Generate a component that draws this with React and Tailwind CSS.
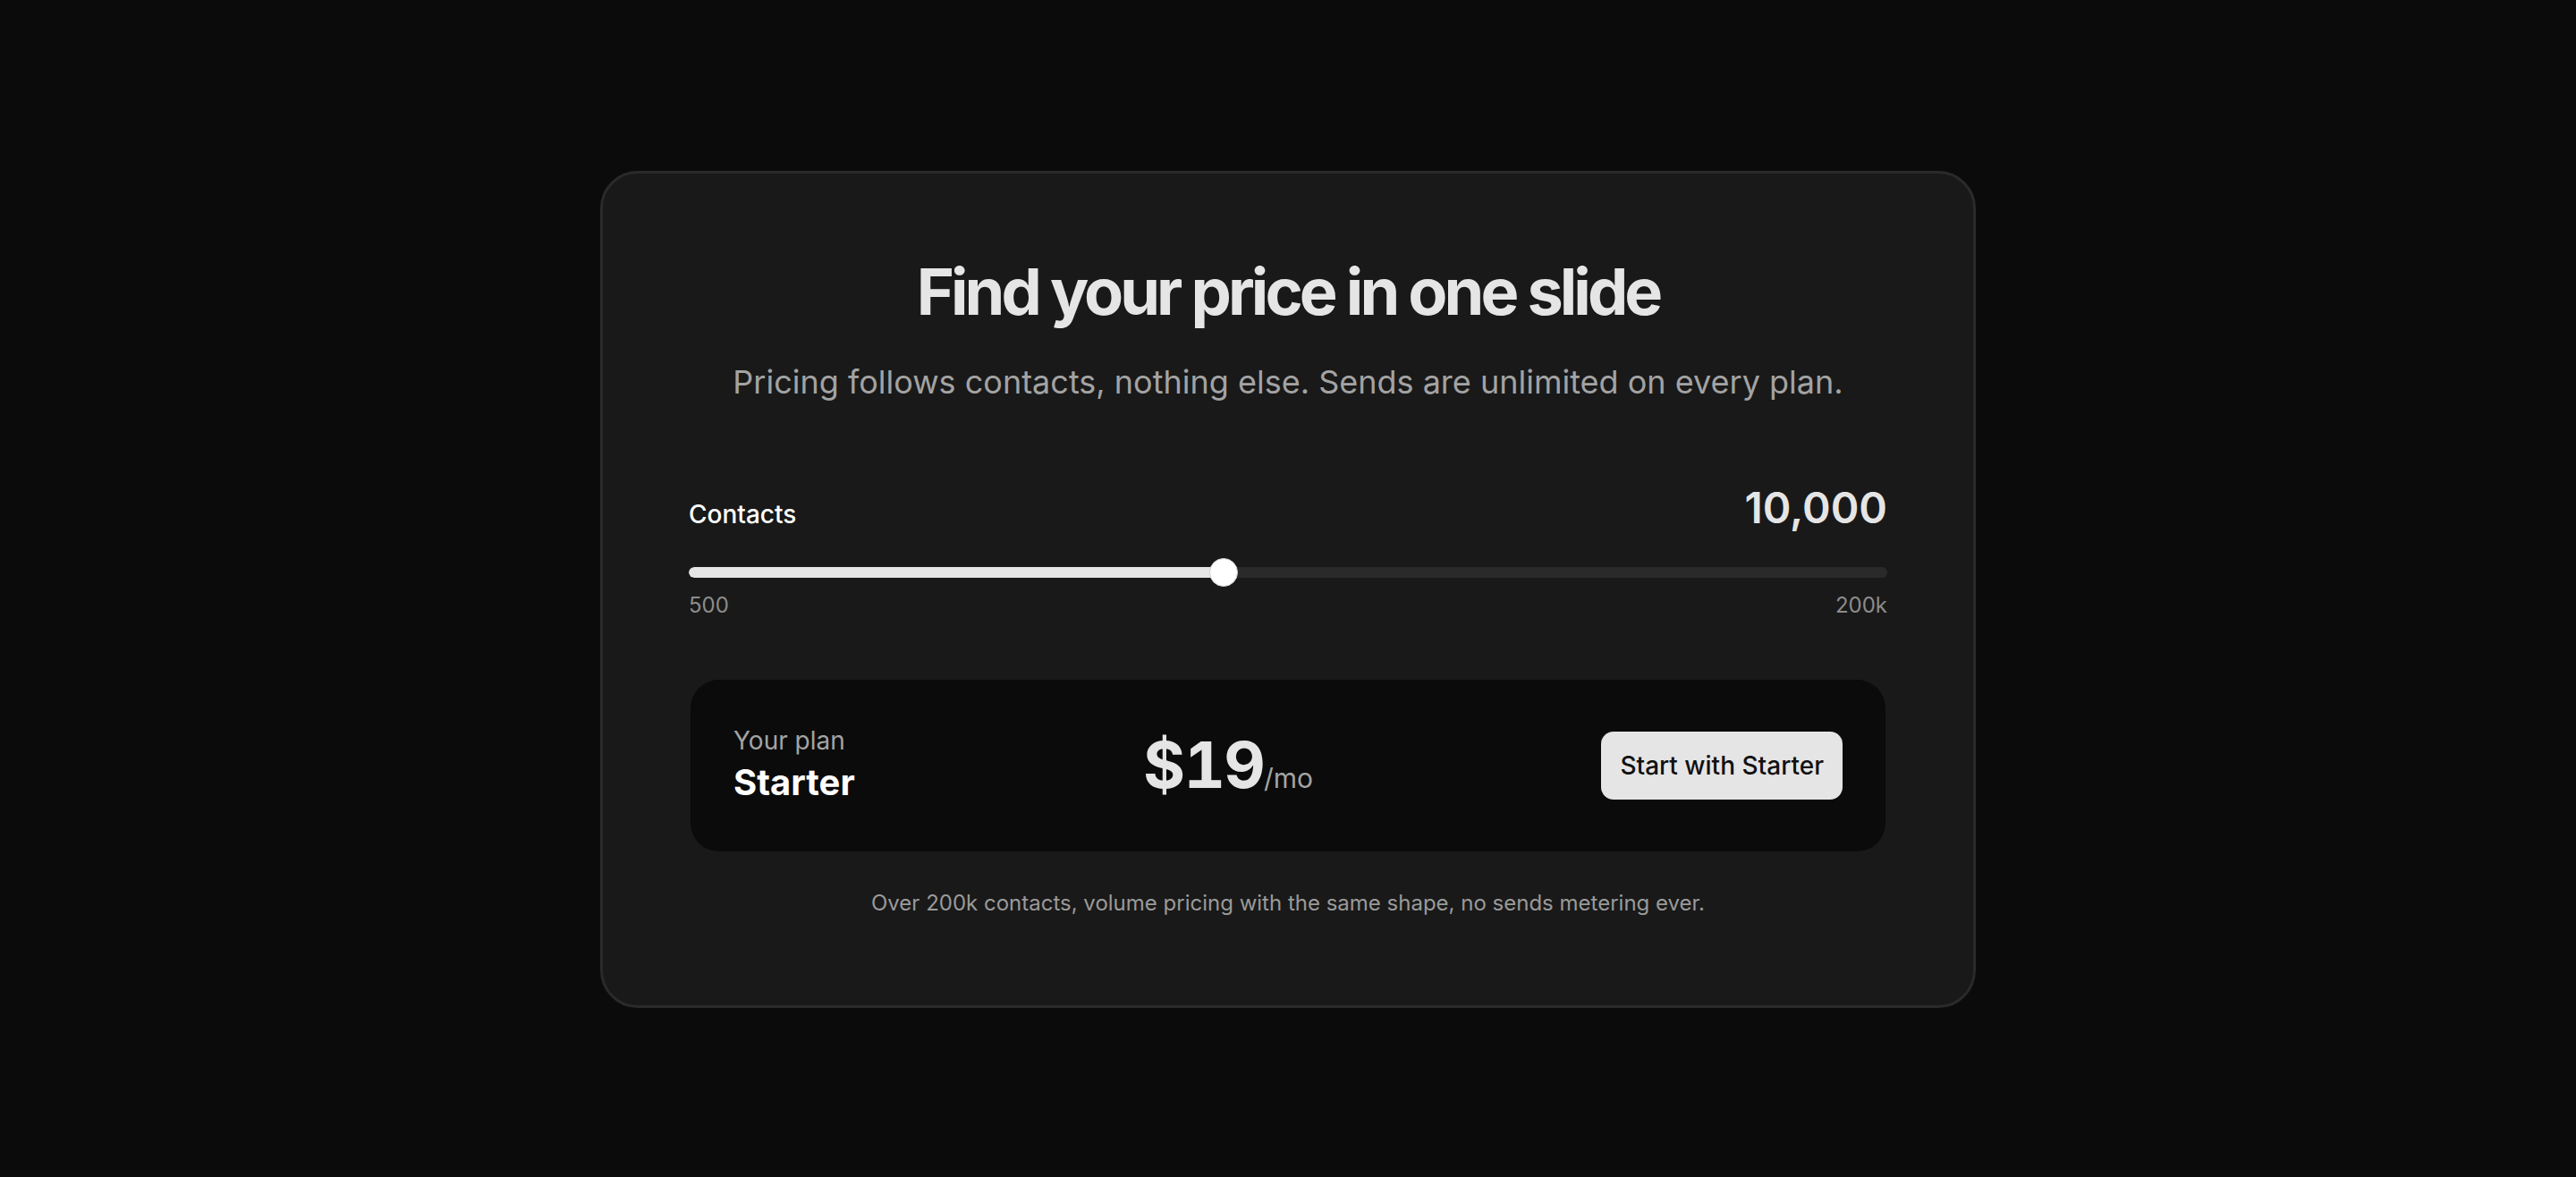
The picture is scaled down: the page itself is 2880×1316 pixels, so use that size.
import React, { useState } from 'react';

const PLANS = [
  { name: 'Starter', price: 19, max: 10000 },
  { name: 'Growth', price: 49, max: 50000 },
  { name: 'Scale', price: 149, max: 200000 },
];

const App = () => {
  // slider position 0..1, tuned to sit where the design shows 10,000
  const [pos] = useState(0.445);
  const contacts = 10000;
  const plan = PLANS.find((p) => contacts <= p.max) || PLANS[PLANS.length - 1];

  return (
    <div className="min-h-screen w-full bg-[#0b0b0b] flex justify-center pt-[191px] font-['Inter',sans-serif]">
      <div className="w-[1538px] h-fit rounded-[42px] border-[3px] border-[#2a2a2a] bg-[#191919] p-24">
        {/* Heading */}
        <h1 className="text-center text-[72px] leading-none font-bold tracking-[-0.055em] text-[#e5e5e5]">
          Find your price in one slide
        </h1>
        <p className="mt-[38px] text-center text-[36px] leading-[1.5] text-[#a3a3a3]">
          Pricing follows contacts, nothing else. Sends are unlimited on every plan.
        </p>

        {/* Contacts slider */}
        <div className="mt-[90px] flex items-baseline justify-between">
          <span className="text-[28px] font-medium text-white">Contacts</span>
          <span className="text-[48px] leading-none font-semibold text-[#e5e5e5]">
            {contacts.toLocaleString('en-US')}
          </span>
        </div>

        <div className="relative mt-[28px] h-8 flex items-center">
          <div className="h-3 w-full rounded-full bg-[#2a2a2a] overflow-hidden">
            <div className="h-full bg-[#e5e5e5] rounded-full" style={{ width: `calc(16px + ${pos} * (100% - 32px))` }} />
          </div>
          <div
            className="absolute top-0 h-8 w-8 rounded-full bg-white border border-[#cfcfcf]"
            style={{ left: `calc(${pos} * (100% - 32px))` }}
          />
        </div>
        <div className="mt-[3px] flex justify-between text-[24px] leading-[1.5] text-[#8c8c8c]">
          <span>500</span>
          <span>200k</span>
        </div>

        {/* Plan summary */}
        <div className="mx-[2px] mt-[65px] h-[192px] rounded-[32px] bg-[#0b0b0b] px-[48px] flex items-center justify-between">
          <div className="mb-[6px] flex flex-col">
            <span className="text-[28px] leading-[1.5] text-[#a3a3a3]">Your plan</span>
            <span className="mt-[2px] text-[40px] leading-[1.2] font-bold text-white">{plan.name}</span>
          </div>
          <div className="flex items-baseline">
            <span className="text-[72px] leading-none font-bold tabular-nums tracking-[-0.025em] text-[#e5e5e5]">${plan.price}</span>
            <span className="text-[30px] text-[#a3a3a3]">/mo</span>
          </div>
          <button className="h-[76px] rounded-[14px] bg-[#e5e5e5] px-[21px] text-[28px] font-medium text-[#111111]">
            Start with {plan.name}
          </button>
        </div>

        <p className="mt-[40px] text-center text-[24px] leading-[1.5] text-[#9a9a9a]">
          Over 200k contacts, volume pricing with the same shape, no sends metering ever.
        </p>
      </div>
    </div>
  );
};

export default App;
